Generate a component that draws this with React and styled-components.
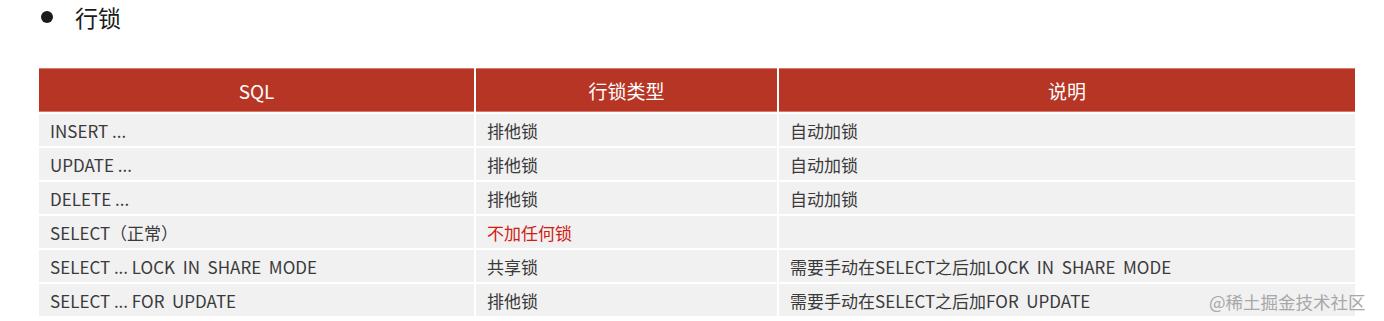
import React from "react";
import styled, { createGlobalStyle } from "styled-components";

const ROWS = [
  { sql: "INSERT ...", type: "排他锁", note: "自动加锁" },
  { sql: "UPDATE ...", type: "排他锁", note: "自动加锁" },
  { sql: "DELETE ...", type: "排他锁", note: "自动加锁" },
  { sql: "SELECT（正常）", type: "不加任何锁", note: "", warn: true },
  {
    sql: "SELECT ... LOCK  IN  SHARE  MODE",
    type: "共享锁",
    note: "需要手动在SELECT之后加LOCK  IN  SHARE  MODE",
  },
  {
    sql: "SELECT ... FOR  UPDATE",
    type: "排他锁",
    note: "需要手动在SELECT之后加FOR  UPDATE",
  },
];

function App() {
  return (
    <>
      <GlobalStyle />
      <Page>
        <Title>
          <Bullet />
          <TitleText>行锁</TitleText>
        </Title>
        <Table>
          <HeadCell>SQL</HeadCell>
          <HeadCell>行锁类型</HeadCell>
          <HeadCell>说明</HeadCell>
          {ROWS.map((row) => (
            <React.Fragment key={row.sql}>
              <Cell>{row.sql}</Cell>
              <Cell warn={row.warn}>{row.type}</Cell>
              <Cell>{row.note}</Cell>
            </React.Fragment>
          ))}
        </Table>
        <Watermark>@稀土掘金技术社区</Watermark>
      </Page>
    </>
  );
}

const GlobalStyle = createGlobalStyle`
  html, body {
    margin: 0;
    padding: 0;
    background: #ffffff;
  }
  body {
    font-family: "Noto Sans CJK SC", "Liberation Sans", sans-serif;
    color: #3a3a3a;
  }
`;

const Page = styled.div`
  position: relative;
  width: 1384px;
  height: 321px;
  overflow: hidden;
  background: #ffffff;
`;

const Title = styled.div`
  display: flex;
  align-items: flex-start;
  height: 34px;
  padding-left: 41px;
`;

const Bullet = styled.span`
  width: 12px;
  height: 12px;
  margin-top: 11px;
  border-radius: 50%;
  background: #1c1c1c;
  margin-right: 22px;
`;

const TitleText = styled.span`
  font-size: 23px;
  line-height: normal;
  color: #1a1a1a;
`;

const Table = styled.div`
  display: grid;
  grid-template-columns: 435px 301px 576px;
  grid-auto-rows: 32px;
  grid-template-rows: 44px;
  column-gap: 2px;
  row-gap: 2px;
  margin: 34px 0 0 39px;
  width: 1316px;
`;

const HeadCell = styled.div`
  display: flex;
  align-items: center;
  justify-content: center;
  background: #b73524;
  color: #ffffff;
  font-size: 19px;
  border-top: 1px solid #d77a6c;
  border-bottom: 1px solid #d77a6c;
`;

const Cell = styled.div`
  display: flex;
  align-items: center;
  padding-left: 11px;
  background: #f1f1f2;
  font-size: 17px;
  white-space: pre;
  color: ${({ warn }) => (warn ? "#d01c12" : "#3a3a3a")};
`;

const Watermark = styled.span`
  position: absolute;
  left: 1209px;
  top: 289px;
  font-size: 17.5px;
  color: #a8a8a8;
`;

export default App;
